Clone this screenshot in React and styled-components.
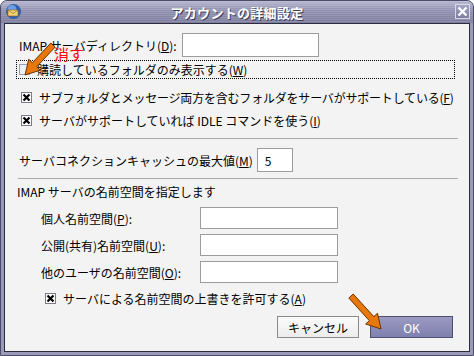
import React from 'react'
import styled, { createGlobalStyle } from 'styled-components'

const GlobalStyle = createGlobalStyle`
  html, body { margin: 0; padding: 0; background: #ffffff; }
  body { font-family: "Noto Sans CJK JP", "DejaVu Sans", sans-serif; }
`

const Window = styled.div`
  position: relative;
  box-sizing: border-box;
  width: 474px;
  height: 356px;
  display: flex;
  flex-direction: column;
  background: #9a9aba;
  border: 1px solid #4c4c68;
  border-radius: 7px 7px 0 0;
  padding: 0 3px 3px;
  overflow: hidden;
`

const TitleBar = styled.div`
  position: relative;
  height: 22px;
  margin: 0 -3px;
  display: flex;
  align-items: center;
  justify-content: center;
  background:
    repeating-linear-gradient(to bottom, rgba(255,255,255,0.14) 0 1px, rgba(0,0,0,0) 1px 2px),
    linear-gradient(to bottom, #b4b4cf 0%, #8e8eae 45%, #7c7c9e 100%);
`

const Title = styled.div`
  color: #ffffff;
  font-size: 13px;
  font-weight: bold;
  letter-spacing: 0.3px;
  text-shadow: 1px 1px 0 #3c3c58;
`

const AppIcon = styled.svg`
  position: absolute;
  left: 4px;
  top: 2px;
`

const CloseBox = styled.div`
  position: absolute;
  right: 3px;
  top: 3px;
  width: 15px;
  height: 15px;
  box-sizing: border-box;
  border: 1px solid #d8d8e8;
  background: linear-gradient(#a4a4c2, #7e7ea0);
  display: flex;
  align-items: center;
  justify-content: center;
`

const Content = styled.div`
  flex: 1;
  display: flex;
  flex-direction: column;
  background: #f3f3f3;
  border: 1px solid #2c2c3c;
  padding: 9px 11px 0 7px;
  font-size: 12px;
  color: #000;
`

const Row = styled.div`
  display: flex;
  align-items: center;
  gap: ${p => p.gap || 0}px;
  height: ${p => p.h || 22}px;
  margin-top: ${p => p.mt || 0}px;
  padding-left: ${p => p.pl || 7}px;
  white-space: nowrap;
`

const FocusRow = styled(Row)`
  box-sizing: border-box;
  margin-left: 4px;
  padding-left: 2px;
  border: 1px dotted #000;
  margin-right: 3px;
`

const Label = styled.span`
  width: ${p => (p.w ? `${p.w}px` : 'auto')};
  flex-shrink: 0;
  line-height: 15px;
  letter-spacing: ${p => p.ls || 0}px;
`

const TextBox = styled.div`
  box-sizing: border-box;
  width: ${p => p.w}px;
  height: ${p => p.h || 22}px;
  background: #ffffff;
  border: 1px solid #9c9c9c;
  padding: 0 7px;
  display: flex;
  align-items: center;
`

const Separator = styled.div`
  height: 1px;
  margin: ${p => p.mt || 6}px 0 0 6px;
  background: #a8a8a8;
`

const Header = styled.div`
  margin-top: 5px;
  padding-left: 5px;
  height: 16px;
  line-height: 16px;
`

const Box = styled.span`
  box-sizing: border-box;
  width: 11px;
  height: 11px;
  flex-shrink: 0;
  margin-right: 7px;
  border: 1px solid ${p => (p.checked ? '#7a7a8a' : '#9aa0b8')};
  background: ${p => (p.checked ? '#ffffff' : '#eef0f8')};
  display: flex;
  align-items: center;
  justify-content: center;
`

const ButtonRow = styled.div`
  display: flex;
  justify-content: flex-end;
  gap: 11px;
  margin-top: 8px;
  padding-right: 5px;
`

const Button = styled.div`
  box-sizing: border-box;
  width: ${p => p.w}px;
  height: 22px;
  display: flex;
  align-items: center;
  justify-content: center;
  border: 1px solid ${p => (p.primary ? '#4e4e6e' : '#8a8a8a')};
  background: ${p => (p.primary ? 'linear-gradient(#9a9ac4, #8080ae)' : 'linear-gradient(#fbfbfb, #ececec)')};
  color: ${p => (p.primary ? '#ffffff' : '#000000')};
  font-size: 12px;
`

const Overlay = styled.svg`
  position: absolute;
  left: 0;
  top: 0;
  pointer-events: none;
`

const Note = styled.div`
  position: absolute;
  left: 53px;
  top: 45px;
  color: #ff0000;
  font-size: 15px;
  line-height: 15px;
`

const Check = ({ checked }) => (
  <Box checked={checked}>
    {checked && (
      <svg width="9" height="9" viewBox="0 0 9 9">
        <path d="M1.5 1.5 L7.5 7.5 M7.5 1.5 L1.5 7.5" stroke="#000" strokeWidth="2.2" />
      </svg>
    )}
  </Box>
)

const arrowPoints = (tx, ty, hx, hy) => {
  const dx = hx - tx
  const dy = hy - ty
  const len = Math.hypot(dx, dy)
  const ux = dx / len
  const uy = dy / len
  const nx = -uy
  const ny = ux
  const head = 14
  const sw = 3
  const hw = 8
  const bx = hx - ux * head
  const by = hy - uy * head
  const pts = [
    [tx + nx * sw, ty + ny * sw],
    [bx + nx * sw, by + ny * sw],
    [bx + nx * hw, by + ny * hw],
    [hx, hy],
    [bx - nx * hw, by - ny * hw],
    [bx - nx * sw, by - ny * sw],
    [tx - nx * sw, ty - ny * sw],
  ]
  return pts.map(p => p.map(v => v.toFixed(1)).join(',')).join(' ')
}

const App = () => (
  <>
    <GlobalStyle />
    <Window>
      <TitleBar>
        <AppIcon width="17" height="17" viewBox="0 0 17 17">
          <circle cx="8.5" cy="8.5" r="7.5" fill="#2f5fae" />
          <circle cx="7" cy="6.5" r="4.5" fill="#6f9ee0" />
          <path d="M3 7 L13 7 L13 13 L3 13 Z" fill="#f3d27a" stroke="#9a6a1a" strokeWidth="0.7" />
          <path d="M3 7 L8 10.5 L13 7" fill="none" stroke="#9a6a1a" strokeWidth="0.7" />
        </AppIcon>
        <Title>アカウントの詳細設定</Title>
        <CloseBox>
          <svg width="11" height="11" viewBox="0 0 11 11">
            <path d="M1.5 1.5 L9.5 9.5 M9.5 1.5 L1.5 9.5" stroke="#fff" strokeWidth="2.4" />
          </svg>
        </CloseBox>
      </TitleBar>
      <Content>
        <Row h={24} gap={5}>
          <Label>IMAP サーバディレクトリ(<u>D</u>):</Label>
          <TextBox w={137} h={24} />
        </Row>
        <FocusRow h={19} mt={3}>
          <Check />
          <Label>購読しているフォルダのみ表示する(<u>W</u>)</Label>
        </FocusRow>
        <Row h={23} mt={7} pl={9}>
          <Check checked />
          <Label ls={-0.2}>サブフォルダとメッセージ両方を含むフォルダをサーバがサポートしている(<u>F</u>)</Label>
        </Row>
        <Row h={23} pl={9}>
          <Check checked />
          <Label>サーバがサポートしていれば IDLE コマンドを使う(<u>I</u>)</Label>
        </Row>
        <Separator mt={6} />
        <Row h={24} mt={9} gap={4}>
          <Label>サーバコネクションキャッシュの最大値(<u>M</u>)</Label>
          <TextBox w={36} h={24}>5</TextBox>
        </Row>
        <Separator mt={6} />
        <Header>IMAP サーバの名前空間を指定します</Header>
        <Row mt={7} pl={29}>
          <Label w={159}>個人名前空間(<u>P</u>):</Label>
          <TextBox w={138} />
        </Row>
        <Row mt={5} pl={29}>
          <Label w={159}>公開(共有)名前空間(<u>U</u>):</Label>
          <TextBox w={138} />
        </Row>
        <Row mt={5} pl={29}>
          <Label w={159}>他のユーザの名前空間(<u>O</u>):</Label>
          <TextBox w={138} />
        </Row>
        <Row h={20} mt={5} pl={33}>
          <Check checked />
          <Label>サーバによる名前空間の上書きを許可する(<u>A</u>)</Label>
        </Row>
        <ButtonRow>
          <Button w={82}>キャンセル</Button>
          <Button w={83} primary>OK</Button>
        </ButtonRow>
      </Content>
      <Note>消す</Note>
      <Overlay width="474" height="356" viewBox="0 0 474 356">
        <polygon points={arrowPoints(52, 44, 24, 74)} fill="#e8780c" stroke="#6a3300" strokeWidth="1" strokeLinejoin="round" />
        <polygon points={arrowPoints(350, 295, 380, 328)} fill="#e8780c" stroke="#6a3300" strokeWidth="1" strokeLinejoin="round" />
      </Overlay>
    </Window>
  </>
)

export default App
